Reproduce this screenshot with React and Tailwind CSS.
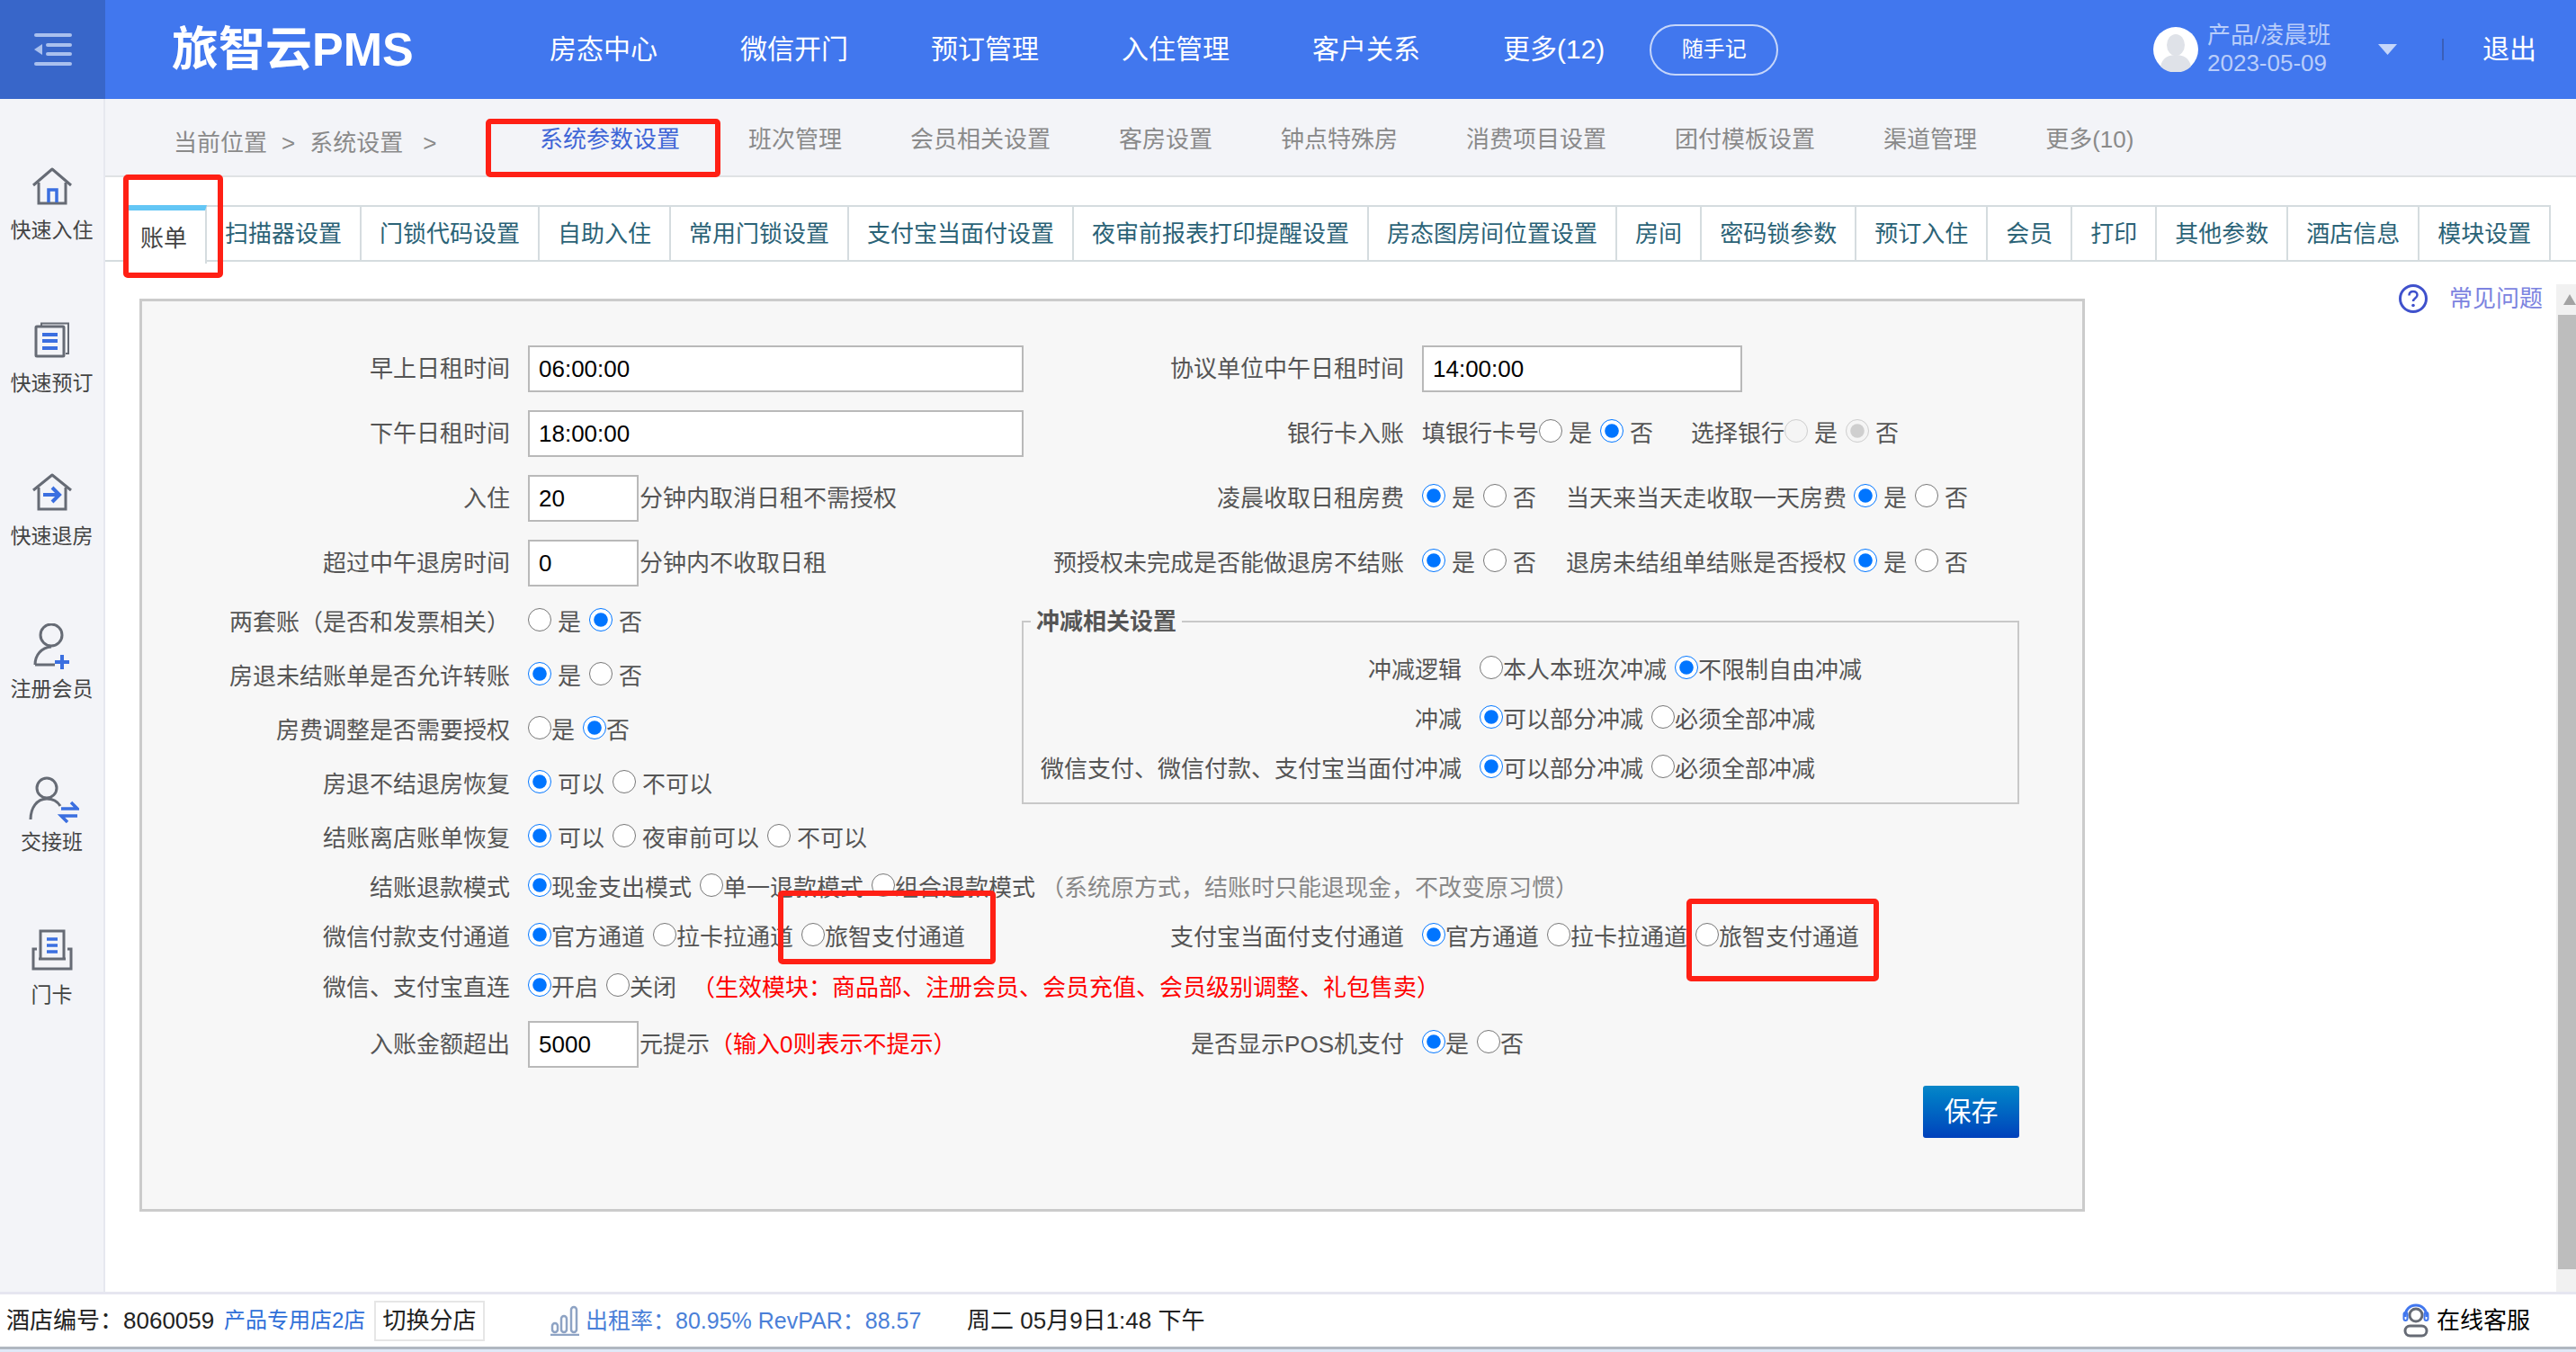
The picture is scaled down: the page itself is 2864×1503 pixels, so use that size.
import { useId } from "react";

const mainNav = ["房态中心", "微信开门", "预订管理", "入住管理", "客户关系", "更多(12)"];
const subNav = ["系统参数设置", "班次管理", "会员相关设置", "客房设置", "钟点特殊房", "消费项目设置", "团付模板设置", "渠道管理", "更多(10)"];
const tabs = ["扫描器设置", "门锁代码设置", "自助入住", "常用门锁设置", "支付宝当面付设置", "夜审前报表打印提醒设置", "房态图房间位置设置", "房间", "密码锁参数", "预订入住", "会员", "打印", "其他参数", "酒店信息", "模块设置"];

function HouseIcon() {
  return (
    <svg width="46" height="42" viewBox="0 0 46 42" fill="none">
      <path d="M2 20 23 2l21 18" stroke="#666b75" strokeWidth="3" strokeLinejoin="round" />
      <path d="M8 17v23h30V17" stroke="#666b75" strokeWidth="3" />
      <path d="M19 39V25h9v14" stroke="#3b6fe0" strokeWidth="3.5" />
    </svg>
  );
}

function BookIcon() {
  return (
    <svg width="42" height="40" viewBox="0 0 42 40" fill="none">
      <path d="M9 4V1.5h30V35h-3" stroke="#666b75" strokeWidth="2" />
      <rect x="3" y="5" width="31" height="33" rx="1" stroke="#666b75" strokeWidth="3" />
      <path d="M10 14h17M10 21h17M10 29h17" stroke="#3b6fe0" strokeWidth="4" />
    </svg>
  );
}

function CheckoutIcon() {
  return (
    <svg width="46" height="42" viewBox="0 0 46 42" fill="none">
      <path d="M2 19 23 2l21 17" stroke="#666b75" strokeWidth="3" strokeLinejoin="round" />
      <path d="M8 16v24h30V16" stroke="#666b75" strokeWidth="3" />
      <path d="M13 24h17M23 16l8 8-8 8" stroke="#3b6fe0" strokeWidth="4" />
    </svg>
  );
}

function MemberIcon() {
  return (
    <svg className="translate-y-[7px]" width="42" height="52" viewBox="0 0 42 52" fill="none">
      <ellipse cx="20" cy="13" rx="12" ry="12" stroke="#666b75" strokeWidth="3" />
      <path d="M2 46c0-11 7-19 18-20M2 46h22" stroke="#666b75" strokeWidth="3" />
      <path d="M32 35v16M24 43h16" stroke="#3b6fe0" strokeWidth="4" />
    </svg>
  );
}

function HandoverIcon() {
  return (
    <svg className="translate-x-[2px] translate-y-[7px]" width="56" height="52" viewBox="0 0 56 52" fill="none">
      <circle cx="20" cy="13" r="11" stroke="#666b75" strokeWidth="3" />
      <path d="M2 48c0-13 7-23 18-23 7 0 12 3 15 8" stroke="#666b75" strokeWidth="3" />
      <path d="M36 36h18l-7-7M54 44H36l7 7" stroke="#3b6fe0" strokeWidth="3.5" />
    </svg>
  );
}

function CardIcon() {
  return (
    <svg className="translate-y-[3px]" width="48" height="48" viewBox="0 0 48 48" fill="none">
      <path d="M11 33V2h26v31" stroke="#666b75" strokeWidth="3" />
      <path d="M7 22H3v22h42V22h-4M9 33h30" stroke="#666b75" strokeWidth="3" />
      <path d="M18 11h12M18 18h12M18 25h12" stroke="#3b6fe0" strokeWidth="3.5" />
    </svg>
  );
}

const sideItems = [
  { label: "快速入住", icon: <HouseIcon /> },
  { label: "快速预订", icon: <BookIcon /> },
  { label: "快速退房", icon: <CheckoutIcon /> },
  { label: "注册会员", icon: <MemberIcon /> },
  { label: "交接班", icon: <HandoverIcon /> },
  { label: "门卡", icon: <CardIcon /> },
];

// native radios, they already draw like the ones in the picture
function Radios({ options, checked, disabled }) {
  const name = useId();
  return (
    <div className="flex items-center gap-[9px]">
      {options.map((opt, i) => (
        <label key={opt} className={`flex items-center ${opt.startsWith(" ") ? "gap-[7px]" : "gap-0"}`}>
          <input
            type="radio"
            name={name}
            defaultChecked={i === checked}
            disabled={disabled}
            className="m-0 h-[26px] w-[26px] shrink-0 -translate-y-[3px] accent-[#0075ff]"
          />
          <span>{opt.trim()}</span>
        </label>
      ))}
    </div>
  );
}

function Field({ value, width }) {
  return (
    <input
      defaultValue={value}
      className={`h-[52px] shrink-0 border-2 border-[#b9b9b9] bg-white px-[10px] text-[26px] text-black ${width}`}
    />
  );
}

function Label({ children, width }) {
  return <div className={`mr-[20px] shrink-0 whitespace-nowrap text-right ${width}`}>{children}</div>;
}

export default function App() {
  return (
    <div className="relative flex h-[1503px] w-[2864px] flex-col overflow-hidden bg-white font-['Liberation_Sans','Noto_Sans_CJK_SC',sans-serif] text-[26px] leading-[32px] text-[#555]">
      {/* top bar */}
      <header className="flex h-[110px] shrink-0 items-center bg-[#4177ee] text-white">
        <div className="flex h-full w-[117px] items-center justify-center bg-[#3866c9]">
          <svg width="42" height="36" viewBox="0 0 42 36" fill="#a9c0ee">
            <rect width="42" height="4" rx="2" />
            <rect x="13" y="11" width="29" height="4" rx="2" />
            <rect x="13" y="21" width="29" height="4" rx="2" />
            <rect y="32" width="42" height="4" rx="2" />
            <path d="M9 12v12l-9-6z" />
          </svg>
        </div>
        <div className="ml-[74px] w-[275px] shrink-0 text-[52px] leading-[60px] font-bold whitespace-nowrap">旅智云PMS</div>
        <nav className="ml-[145px] flex items-center gap-[92px] text-[30px]">
          {mainNav.map((item) => (
            <span key={item} className="whitespace-nowrap">{item}</span>
          ))}
        </nav>
        <button className="ml-[50px] h-[57px] w-[143px] rounded-full border-2 border-white/70 text-[24px]">随手记</button>
        <div className="ml-auto flex items-center pr-[44px]">
          <svg width="50" height="50" viewBox="0 0 50 50">
            <circle cx="25" cy="25" r="25" fill="#fff" />
            <ellipse cx="25" cy="20" rx="10" ry="12" fill="#dfe2e8" />
            <path d="M8 44c2-10 9-13 17-13s15 3 17 13a25 25 0 0 1-34 0z" fill="#dfe2e8" />
          </svg>
          <div className="ml-[10px] w-[190px] text-[#b9cdfa]">
            <div className="leading-[31px]">产品/凌晨班</div>
            <div className="leading-[31px]">2023-05-09</div>
          </div>
          <svg width="21" height="12" viewBox="0 0 21 12" fill="#c5d6fa">
            <path d="M0 0h21L10.5 12z" />
          </svg>
          <div className="ml-[50px] h-[24px] w-[2px] bg-[#3a5fb8]" />
          <div className="ml-[43px] text-[30px]">退出</div>
        </div>
      </header>

      <div className="flex min-h-0 flex-1">
        {/* left shortcuts */}
        <aside className="flex w-[117px] shrink-0 flex-col items-center border-r-2 border-[#e6e8ef] bg-[#f3f4f8] pt-[66px] text-[23px] text-[#444]">
          {sideItems.map((item) => (
            <div key={item.label} className="flex h-[170px] w-full flex-col items-center">
              <div className="flex h-[52px] items-end">{item.icon}</div>
              <div className="mt-[13px] leading-[30px] whitespace-nowrap">{item.label}</div>
            </div>
          ))}
        </aside>

        <main className="flex min-w-0 flex-1 flex-col">
          {/* second level nav */}
          <div className="flex h-[87px] shrink-0 border-b-2 border-[#e0e2e4] bg-[#f3f4f8] text-[#8a8a8a]">
            <div className="flex w-[448px] shrink-0 items-center gap-[16px] pt-[13px] pl-[76px] whitespace-nowrap">
              <span>当前位置</span>
              <span>&gt;</span>
              <span>系统设置</span>
              <span className="ml-[6px]">&gt;</span>
            </div>
            <div className="flex gap-[6px]">
              {subNav.map((item, i) => (
                <div
                  key={item}
                  className={`flex h-[87px] items-center border-b-4 px-[35px] pt-[7px] whitespace-nowrap ${i === 0 ? "border-[#3f5fb8] text-[#3f66d6]" : "border-transparent"}`}
                >
                  {item}
                </div>
              ))}
            </div>
          </div>

          {/* third level tabs */}
          <div className="shrink-0 border-b-2 border-[#d5dcdf] pt-[31px]">
            <div className="ml-[26px] flex h-[61px] w-fit border-t-2 border-[#d5dcdf] text-[#2b6377]">
              <div className="-mt-[2px] flex h-[65px] w-[87px] items-center border-t-[6px] border-r-2 border-[#63c6f5] border-r-[#d5dcdf] bg-white pt-[3px] pl-[13px] text-[#444]">
                账单
              </div>
              {tabs.map((tab) => (
                <div key={tab} className="flex h-[59px] items-center border-r-2 border-[#d5dcdf] px-[20px] whitespace-nowrap">
                  {tab}
                </div>
              ))}
            </div>
          </div>

          <div className="flex min-h-0 flex-1">
            {/* settings panel */}
            <div className="mt-[41px] ml-[38px] h-[1015px] w-[2163px] shrink-0 border-[3px] border-[#cbcbcb] bg-[#f7f7f7] pt-[49px]">
              <div className="flex h-[52px] items-center">
                <div className="flex w-[978px] shrink-0 items-center">
                  <Label width="w-[409px]">早上日租时间</Label>
                  <Field value="06:00:00" width="w-[551px]" />
                </div>
                <Label width="w-[425px]">协议单位中午日租时间</Label>
                <Field value="14:00:00" width="w-[356px]" />
              </div>

              <div className="mt-[20px] flex h-[52px] items-center">
                <div className="flex w-[978px] shrink-0 items-center">
                  <Label width="w-[409px]">下午日租时间</Label>
                  <Field value="18:00:00" width="w-[551px]" />
                </div>
                <Label width="w-[425px]">银行卡入账</Label>
                <span>填银行卡号</span>
                <Radios options={[" 是", " 否"]} checked={1} />
                <span className="ml-[42px]">选择银行</span>
                <Radios options={[" 是", " 否"]} checked={1} disabled />
              </div>

              <div className="mt-[20px] flex h-[52px] items-center">
                <div className="flex w-[978px] shrink-0 items-center">
                  <Label width="w-[409px]">入住</Label>
                  <Field value="20" width="w-[123px]" />
                  <span className="ml-[1px]">分钟内取消日租不需授权</span>
                </div>
                <Label width="w-[425px]">凌晨收取日租房费</Label>
                <Radios options={[" 是", " 否"]} checked={0} />
                <span className="ml-[33px] mr-[8px]">当天来当天走收取一天房费</span>
                <Radios options={[" 是", " 否"]} checked={0} />
              </div>

              <div className="mt-[20px] flex h-[52px] items-center">
                <div className="flex w-[978px] shrink-0 items-center">
                  <Label width="w-[409px]">超过中午退房时间</Label>
                  <Field value="0" width="w-[123px]" />
                  <span className="ml-[1px]">分钟内不收取日租</span>
                </div>
                <Label width="w-[425px]">预授权未完成是否能做退房不结账</Label>
                <Radios options={[" 是", " 否"]} checked={0} />
                <span className="ml-[33px] mr-[8px]">退房未结组单结账是否授权</span>
                <Radios options={[" 是", " 否"]} checked={0} />
              </div>

              <div className="mt-[10px] flex">
                <div className="w-[978px] shrink-0">
                  <div className="flex h-[60px] items-center">
                    <Label width="w-[409px]">两套账（是否和发票相关）</Label>
                    <Radios options={[" 是", " 否"]} checked={1} />
                  </div>
                  <div className="flex h-[60px] items-center">
                    <Label width="w-[409px]">房退未结账单是否允许转账</Label>
                    <Radios options={[" 是", " 否"]} checked={0} />
                  </div>
                  <div className="flex h-[60px] items-center">
                    <Label width="w-[409px]">房费调整是否需要授权</Label>
                    <Radios options={["是", "否"]} checked={1} />
                  </div>
                  <div className="flex h-[60px] items-center">
                    <Label width="w-[409px]">房退不结退房恢复</Label>
                    <Radios options={[" 可以", " 不可以"]} checked={0} />
                  </div>
                </div>

                <fieldset className="mt-[13px] h-[219px] w-[1109px] shrink-0 border-2 border-[#c8c8c8] pt-[10px]">
                  <legend className="ml-[8px] px-[6px] font-bold">冲减相关设置</legend>
                  <div className="flex h-[55px] items-center">
                    <Label width="w-[487px]">冲减逻辑</Label>
                    <Radios options={["本人本班次冲减", "不限制自由冲减"]} checked={1} />
                  </div>
                  <div className="flex h-[55px] items-center">
                    <Label width="w-[487px]">冲减</Label>
                    <Radios options={["可以部分冲减", "必须全部冲减"]} checked={0} />
                  </div>
                  <div className="flex h-[55px] items-center">
                    <Label width="w-[487px]">微信支付、微信付款、支付宝当面付冲减</Label>
                    <Radios options={["可以部分冲减", "必须全部冲减"]} checked={0} />
                  </div>
                </fieldset>
              </div>

              <div className="mt-[3px] flex h-[54px] items-center">
                <Label width="w-[409px]">结账离店账单恢复</Label>
                <Radios options={[" 可以", " 夜审前可以", " 不可以"]} checked={0} />
              </div>
              <div className="flex h-[55px] items-center">
                <Label width="w-[409px]">结账退款模式</Label>
                <Radios options={["现金支出模式", "单一退款模式", "组合退款模式"]} checked={0} />
                <span className="ml-[6px] text-[#888]">（系统原方式，结账时只能退现金，不改变原习惯）</span>
              </div>
              <div className="flex h-[56px] items-center">
                <div className="flex w-[978px] shrink-0 items-center">
                  <Label width="w-[409px]">微信付款支付通道</Label>
                  <Radios options={["官方通道", "拉卡拉通道", "旅智支付通道"]} checked={0} />
                </div>
                <Label width="w-[425px]">支付宝当面付支付通道</Label>
                <Radios options={["官方通道", "拉卡拉通道", "旅智支付通道"]} checked={0} />
              </div>
              <div className="flex h-[56px] items-center">
                <Label width="w-[409px]">微信、支付宝直连</Label>
                <Radios options={["开启", "关闭"]} checked={0} />
                <span className="ml-[17px] text-[#f00]">（生效模块：商品部、注册会员、会员充值、会员级别调整、礼包售卖）</span>
              </div>
              <div className="mt-[9px] flex h-[52px] items-center">
                <div className="flex w-[978px] shrink-0 items-center">
                  <Label width="w-[409px]">入账金额超出</Label>
                  <Field value="5000" width="w-[123px]" />
                  <span className="ml-[1px]">元提示</span>
                  <span className="text-[#f00]">（输入0则表示不提示）</span>
                </div>
                <Label width="w-[425px]">是否显示POS机支付</Label>
                <Radios options={["是", "否"]} checked={0} />
              </div>
              <div className="mt-[20px] flex justify-end pr-[70px]">
                <button className="h-[58px] w-[107px] rounded-[3px] bg-linear-to-b from-[#0b87c8] to-[#0040bb] text-[30px] text-white">保存</button>
              </div>
            </div>

            {/* help link */}
            <div className="flex flex-1 items-start justify-end pt-[25px]">
              <div className="mr-[15px] flex h-[32px] items-center text-[#7c83e0] whitespace-nowrap">
                <svg width="32" height="32" viewBox="0 0 32 32" fill="none">
                  <circle cx="16" cy="16" r="14.5" stroke="#3f51cc" strokeWidth="3" />
                  <path d="M11.5 12.5c0-3 2-4.5 4.5-4.5s4.5 1.5 4.5 4c0 3.5-4.500 3.500-4.500 7" stroke="#3f51cc" strokeWidth="2.500" />
                  <circle cx="16" cy="23.500" r="1.800" fill="#3f51cc" />
                </svg>
                <span className="ml-[24px]">常见问题</span>
              </div>
            </div>
            <div className="mt-[25px] flex w-[22px] shrink-0 flex-col bg-[#f1f1f1]">
              <div className="flex h-[34px] items-center justify-end">
                <svg width="14" height="12" viewBox="0 0 14 12" fill="#a3a3a3">
                  <path d="M7 0l7 12H0z" />
                </svg>
              </div>
              <div className="ml-[2px] h-[1061px] bg-[#bdbdbd]" />
            </div>
          </div>
        </main>
      </div>

      {/* status bar */}
      <footer className="flex h-[64px] shrink-0 items-center border-t-[3px] border-b-[3px] border-t-[#e6e6f0] border-b-[#b0b7c0] pl-[7px] text-[#222]">
        <span className="w-[229px] shrink-0 whitespace-nowrap">酒店编号：8060059</span>
        <span className="ml-[13px] w-[157px] shrink-0 text-[24px] whitespace-nowrap text-[#2f6fd8]">产品专用店2店</span>
        <button className="ml-[10px] h-[45px] w-[123px] shrink-0 border-2 border-[#e6e6e6]">切换分店</button>
        <svg className="ml-[73px] shrink-0" width="32" height="34" viewBox="0 0 32 34" fill="none" stroke="#8ea3c4" strokeWidth="2.500">
          <rect x="2" y="20" width="6" height="10" rx="3" />
          <rect x="12" y="12" width="6" height="18" rx="3" />
          <rect x="23" y="2" width="6" height="28" rx="3" />
          <path d="M0 33h32" />
        </svg>
        <span className="ml-[7px] w-[379px] shrink-0 text-[25px] whitespace-nowrap text-[#4a7fd8]">出租率：80.95% RevPAR：88.57</span>
        <span className="ml-[45px] whitespace-nowrap">周二 05月9日1:48 下午</span>
        <div className="ml-auto flex items-center pr-[51px] text-black">
          <svg width="30" height="38" viewBox="0 0 30 38" fill="none">
            <circle cx="15" cy="13" r="7" stroke="#666b75" strokeWidth="3" />
            <path d="M3 15C3 7 8 2 15 2s12 5 12 13" stroke="#4177ee" strokeWidth="3" />
            <rect x="1.500" y="10" width="4" height="9" rx="2" stroke="#4177ee" strokeWidth="2" />
            <rect x="24.500" y="10" width="4" height="9" rx="2" stroke="#4177ee" strokeWidth="2" />
            <rect x="3" y="25" width="24" height="11" rx="5.500" stroke="#666b75" strokeWidth="3" />
          </svg>
          <span className="ml-[8px] whitespace-nowrap">在线客服</span>
        </div>
      </footer>
      <div className="h-[3px] shrink-0 bg-[#dfe8f7]" />

      {/* red marks that sit over the screenshot */}
      <div className="absolute top-[132px] left-[540px] h-[65px] w-[261px] rounded-[5px] border-[6px] border-[#ff2015]" />
      <div className="absolute top-[194px] left-[137px] h-[115px] w-[111px] rounded-[5px] border-[6px] border-[#ff2015]" />
      <div className="absolute top-[990px] left-[865px] h-[82px] w-[242px] rounded-[5px] border-[6px] border-[#ff2015]" />
      <div className="absolute top-[999px] left-[1875px] h-[92px] w-[214px] rounded-[5px] border-[6px] border-[#ff2015]" />
    </div>
  );
}
